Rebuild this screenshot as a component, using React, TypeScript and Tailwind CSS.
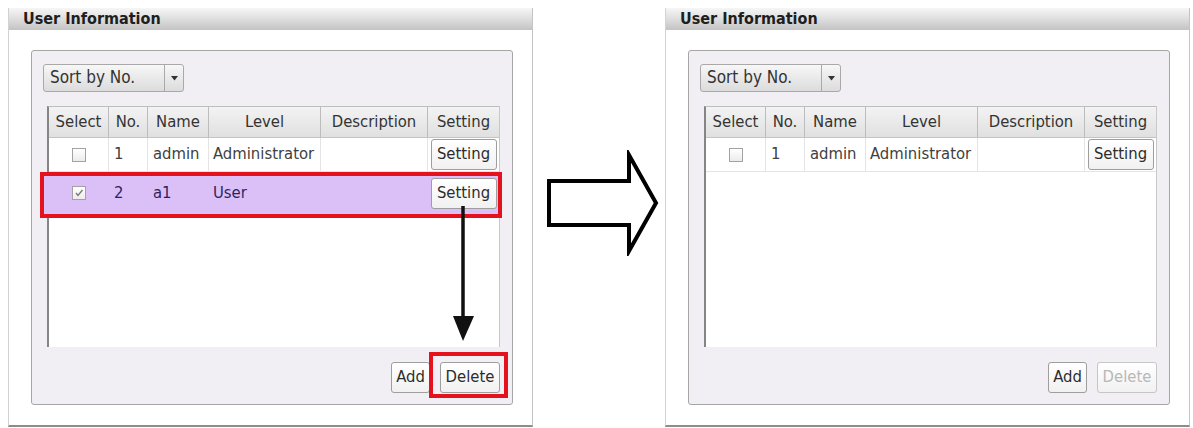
import * as React from "react";

type Row = { no: string; name: string; level: string; checked?: boolean; picked?: boolean };

const grid = "grid grid-cols-[60px_39px_61px_112px_107px_71px]";
const font = "font-['DejaVu_Sans_Condensed','DejaVu_Sans',sans-serif]";

function CheckBox({ checked }: { checked?: boolean }) {
  return (
    <span className="flex h-[14px] w-[14px] items-center justify-center border border-[#a2a2a2] bg-gradient-to-b from-white to-[#ececec]">
      {checked && (
        <svg width="10" height="10" viewBox="0 0 10 10">
          <polyline points="2,5 4,7.5 8.5,2" fill="none" stroke="#7a7a7a" strokeWidth="1.4" />
        </svg>
      )}
    </span>
  );
}

function SmallButton({ label, disabled, w }: { label: string; disabled?: boolean; w: string }) {
  return (
    <button
      className={`flex h-[31px] ${w} items-center justify-center rounded-[3px] border bg-gradient-to-b from-white to-[#f1f1f1] text-[16.5px] ${
        disabled ? "border-[#c6c6c6] text-[#b8b8b8]" : "border-[#9e9e9e] text-[#2c2c2c]"
      }`}
    >
      {label}
    </button>
  );
}

function UserTable({ rows }: { rows: Row[] }) {
  const heads = ["Select", "No.", "Name", "Level", "Description", "Setting"];
  return (
    <div className="ml-[4px] mt-[14px] h-[241px] w-[453px] border-l-2 border-r border-t border-l-[#858585] border-r-[#c8c8c8] border-t-[#bdbdbd] bg-white">
      <div className={`${grid} h-[31px] border-b border-[#c4c4c4]`}>
        {heads.map((h, i) => (
          <div
            key={h}
            className={`flex items-center justify-center bg-gradient-to-b from-[#f3f3f3] to-[#e0e0e0] text-[16.5px] text-[#333] ${
              i < heads.length - 1 ? "border-r border-[#bcbcbc]" : ""
            }`}
          >
            {h}
          </div>
        ))}
      </div>
      {rows.map((r) => {
        // the highlighted row is drawn as one solid band, no cell lines
        const cell = r.picked ? "" : "border-r border-[#e4e4e4]";
        return (
          <div
            key={r.no}
            className={`${grid} relative z-0 ${r.picked ? "h-[42px] text-[#2e1f63]" : "h-[34px] border-b border-[#e4e4e4] text-[#404040]"} text-[16.5px]`}
          >
            {r.picked && (
              <div className="absolute -left-[9px] -right-[3px] top-0 -bottom-[4px] -z-10 border-4 border-[#e3121d] bg-[#dbc0f7]" />
            )}
            <div className={`flex items-center justify-center ${cell}`}>
              <CheckBox checked={r.checked} />
            </div>
            <div className={`flex items-center pl-[5px] ${cell}`}>{r.no}</div>
            <div className={`flex items-center pl-[5px] ${cell}`}>{r.name}</div>
            <div className={`flex items-center pl-[4px] ${cell}`}>{r.level}</div>
            <div className={cell} />
            <div className="flex items-center justify-center">
              <SmallButton label="Setting" w="w-[66px] h-[28px]" />
            </div>
          </div>
        );
      })}
    </div>
  );
}

function UserPanel({ rows, deleteOff, marks }: { rows: Row[]; deleteOff?: boolean; marks?: boolean }) {
  return (
    <div className={`${font} relative flex h-[419px] w-[525px] flex-col border-b-2 border-l border-r border-b-[#8c8c8c] border-l-[#d2d2d2] border-r-[#c4c4c4] bg-white`}>
      <div className="flex h-[22px] items-center bg-gradient-to-b from-[#f6f6f6] via-[#dedede] to-[#c3c3c3] pl-[14px] text-[16px] font-bold text-[#1e1e1e]">
        User Information
      </div>
      <div className="ml-[22px] mr-[19px] mt-[20px] flex h-[355px] flex-col rounded-[3px] border border-[#a6a6a6] bg-[#f1eff3] pl-[11px] pt-[13px]">
        <div className="flex h-[28px] w-[141px] rounded-[3px] border border-[#a9a9a9] bg-gradient-to-b from-[#f7f7f7] to-[#dcdcdc]">
          <span className="flex flex-1 items-center pl-[6px] text-[17px] text-[#333]">Sort by No.</span>
          <span className="flex w-[19px] items-center justify-center border-l border-[#a9a9a9]">
            <svg width="7" height="5" viewBox="0 0 7 5">
              <polygon points="0,0 7,0 3.5,4.5" fill="#333" />
            </svg>
          </span>
        </div>
        <UserTable rows={rows} />
        <div className="mr-[12px] mt-[15px] flex justify-end gap-[10px]">
          <SmallButton label="Add" w="w-[39px]" />
          <SmallButton label="Delete" w="w-[60px]" disabled={deleteOff} />
        </div>
      </div>
      {marks && (
        <>
          <svg className="absolute left-[443px] top-[198px]" width="24" height="138" viewBox="0 0 24 138">
            <line x1="11" y1="0" x2="11" y2="114" stroke="#111" strokeWidth="3.5" />
            <polygon points="1,110 22,110 11,135" fill="#111" />
          </svg>
          <div className="absolute left-[420px] top-[344px] h-[46px] w-[79px] border-4 border-[#e3121d]" />
        </>
      )}
    </div>
  );
}

export default function App() {
  return (
    <div className="flex h-[428px] w-[1193px] bg-white pl-[8px] pt-[8px]">
      <UserPanel
        marks
        rows={[
          { no: "1", name: "admin", level: "Administrator" },
          { no: "2", name: "a1", level: "User", checked: true, picked: true },
        ]}
      />
      <div className="w-[132px] pt-[142px]">
        <svg width="132" height="106" viewBox="0 0 132 106">
          <polygon
            points="16,31 96,31 96,5 123,53 96,101 96,75 16,75"
            fill="white"
            stroke="#000"
            strokeWidth="4"
            strokeLinejoin="miter"
          />
        </svg>
      </div>
      <UserPanel deleteOff rows={[{ no: "1", name: "admin", level: "Administrator" }]} />
    </div>
  );
}
